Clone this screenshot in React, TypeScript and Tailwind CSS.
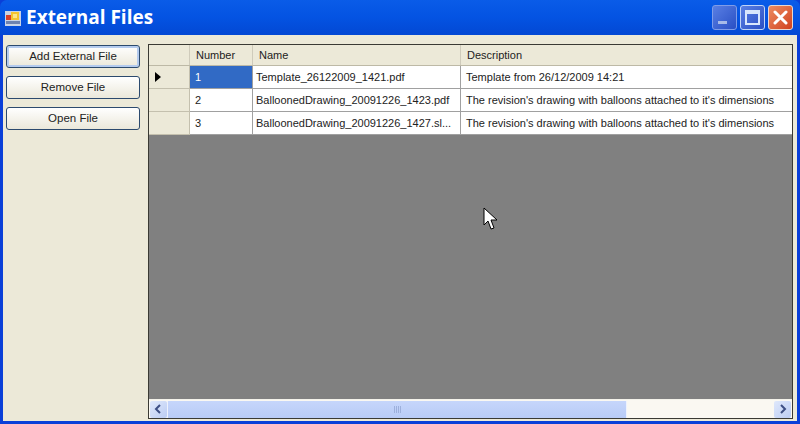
const rows = [
  {
    num: "1",
    name: "Template_26122009_1421.pdf",
    desc: "Template from 26/12/2009 14:21",
  },
  {
    num: "2",
    name: "BalloonedDrawing_20091226_1423.pdf",
    desc: "The revision's drawing with balloons attached to it's dimensions",
  },
  {
    num: "3",
    name: "BalloonedDrawing_20091226_1427.sl...",
    desc: "The revision's drawing with balloons attached to it's dimensions",
  },
]

function AppIcon() {
  return (
    <svg width="16" height="16" viewBox="0 0 16 16" className="shrink-0">
      <rect x="0" y="1" width="16" height="15" fill="#c9d3e6" />
      <rect x="1" y="5" width="5" height="5" fill="#d8402a" />
      <rect x="6" y="2" width="8" height="8" fill="#f4c430" />
      <rect x="8" y="4" width="4" height="4" fill="#fbe58a" />
      <rect x="1" y="11" width="14" height="3" fill="#6d82b0" />
    </svg>
  )
}

function TitleButtons() {
  return (
    <div className="flex items-center gap-[3px]">
      <div className="w-[25px] h-[25px] rounded-[3px] border border-[#7f9ce8] bg-gradient-to-br from-[#5a7fe4] to-[#2a4fc4] flex items-end pl-[5px] pb-[5px]">
        <div className="w-[9px] h-[3px] bg-[#a8bbe8]" />
      </div>
      <div className="w-[25px] h-[25px] rounded-[3px] border border-[#c0d4f8] bg-gradient-to-br from-[#5a7fe4] to-[#2a4fc4] flex items-center justify-center">
        <div className="w-[15px] h-[15px] border-[2px] border-t-[4px] border-[#d8e6fc]" />
      </div>
      <div className="w-[25px] h-[25px] rounded-[3px] border border-[#e8d8d0] bg-gradient-to-br from-[#ec8a60] to-[#d0401c] flex items-center justify-center">
        <svg width="15" height="15" viewBox="0 0 15 15">
          <path d="M2 2 L13 13 M13 2 L2 13" stroke="#fff" strokeWidth="3" strokeLinecap="round" />
        </svg>
      </div>
    </div>
  )
}

function SideButton({ label, active }: { label: string; active?: boolean }) {
  return (
    <button
      className={`w-[134px] h-[23px] rounded-[3px] border border-[#2c4a6e] bg-gradient-to-b from-white to-[#ebe8da] text-[11.5px] text-[#222] ${
        active ? "shadow-[inset_0_0_0_2px_#b4cbee]" : ""
      }`}
    >
      {label}
    </button>
  )
}

function HeaderCell({ label, className }: { label: string; className: string }) {
  return (
    <div className={`h-full shrink-0 flex items-center pl-[6px] border-r border-[#cfcbbb] ${className}`}>{label}</div>
  )
}

function ScrollArrow({ d }: { d: string }) {
  return (
    <div className="w-[17px] h-[17px] bg-gradient-to-br from-[#dfe8fb] to-[#bccdf3] rounded-[2px] flex items-center justify-center shrink-0">
      <svg width="9" height="10" viewBox="0 0 9 10">
        <path d={d} fill="none" stroke="#3d4f84" strokeWidth="2" />
      </svg>
    </div>
  )
}

export default function App() {
  return (
    <div className="relative w-[800px] h-[424px] flex flex-col overflow-hidden bg-[#0a3fd8] font-['Liberation_Sans',Arial,sans-serif]">
      <div className="h-[35px] shrink-0 flex items-center justify-between pl-[5px] pr-[7px] rounded-t-[7px] bg-gradient-to-b from-[#0a5ce8] via-[#0453e2] to-[#0348d4]">
        <div className="flex items-center gap-[5px]">
          <AppIcon />
          <span className="text-[19px] font-bold text-white font-['Open_Sans',sans-serif] leading-none">
            External Files
          </span>
        </div>
        <TitleButtons />
      </div>

      <div className="flex-1 mx-[3px] mb-[3px] bg-[#ece9d8] flex min-h-0 pt-[9px] pb-[2px] pr-[4px]">
        <div className="w-[145px] shrink-0 pl-[3px] pt-[1px] flex flex-col gap-[8px]">
          <SideButton label="Add External File" active />
          <SideButton label="Remove File" />
          <SideButton label="Open File" />
        </div>

        <div className="flex-1 min-w-0 flex flex-col border border-[#3a3a34] bg-[#808080] text-[11px] text-[#222]">
          <div className="h-[21px] shrink-0 flex bg-[#ece9d8] border-b border-[#bdb9a6]">
            <div className="w-[41px] h-full shrink-0 border-r border-[#cfcbbb]" />
            <HeaderCell label="Number" className="w-[63px]" />
            <HeaderCell label="Name" className="w-[208px]" />
            <div className="flex-1 h-full flex items-center pl-[6px]">Description</div>
          </div>

          {rows.map((row, i) => (
            <div key={row.num} className="h-[23px] shrink-0 flex">
              <div className="w-[41px] h-full shrink-0 bg-[#ece9d8] border-r border-b border-[#c4c0ae] flex items-center pl-[6px]">
                {i === 0 && (
                  <svg width="6" height="10" viewBox="0 0 6 10">
                    <path d="M0 0 L6 5 L0 10 Z" fill="#000" />
                  </svg>
                )}
              </div>
              <div
                className={`w-[63px] h-full shrink-0 flex items-center pl-[5px] border-r border-b border-[#a0a0a0] ${
                  i === 0 ? "bg-[#316ac5] text-white" : "bg-white"
                }`}
              >
                {row.num}
              </div>
              <div className="w-[208px] h-full shrink-0 flex items-center pl-[3px] bg-white border-r border-b border-[#a0a0a0] whitespace-nowrap overflow-hidden">
                {row.name}
              </div>
              <div className="flex-1 min-w-0 h-full flex items-center pl-[5px] bg-white border-b border-[#a0a0a0] whitespace-nowrap overflow-hidden">{row.desc}</div>
            </div>
          ))}

          <div className="flex-1" />

          <div className="h-[19px] shrink-0 flex items-center px-[1px] bg-[#faf8f2] border-t border-[#f4f2ea]">
            <ScrollArrow d="M6 1 L2 5 L6 9" />
            <div className="w-[460px] h-[17px] bg-gradient-to-b from-[#c6d6fb] to-[#b8cbf6] border-x border-[#eef2fc] flex items-center justify-center gap-[1px]">
              <div className="w-[1px] h-[7px] bg-[#9db0dc]" />
              <div className="w-[1px] h-[7px] bg-[#9db0dc]" />
              <div className="w-[1px] h-[7px] bg-[#9db0dc]" />
              <div className="w-[1px] h-[7px] bg-[#9db0dc]" />
            </div>
            <div className="flex-1" />
            <ScrollArrow d="M3 1 L7 5 L3 9" />
          </div>
        </div>
      </div>

      <svg width="16" height="24" viewBox="0 0 16 24" className="absolute left-[483px] top-[207px]">
        <path d="M1 1 L1 18 L5 14 L8 22 L11 21 L8 13 L14 13 Z" fill="#fff" stroke="#000" strokeWidth="1" />
      </svg>
    </div>
  )
}
